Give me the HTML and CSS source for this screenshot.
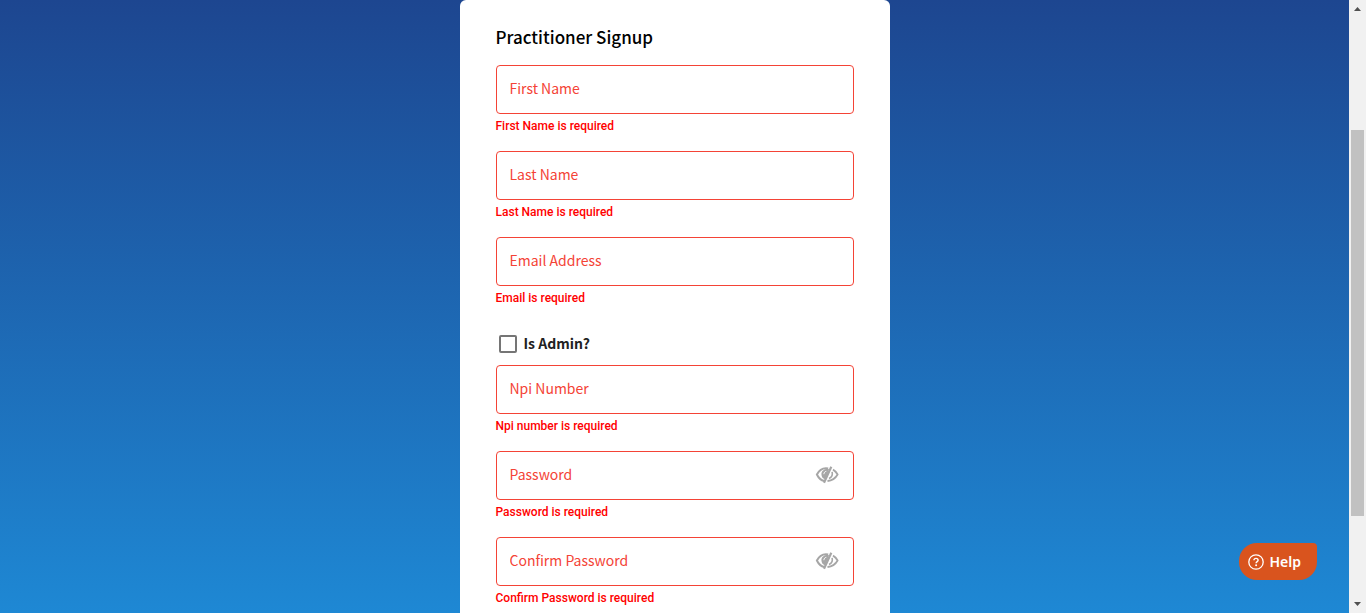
FILE: index.html
```html
<!DOCTYPE html>
<html lang="en">
<head>
<meta charset="utf-8">
<meta name="viewport" content="width=device-width, initial-scale=1">
<title>Practitioner Signup</title>
<link rel="stylesheet" href="styles.css">
</head>
<body>
<svg class="sprite" aria-hidden="true">
  <symbol id="eye-off" viewBox="0 0 24 20">
    <path d="M13.2 3.4C8 2.4 4 5.400 1.900 9.500C3.600 13 6 15.400 9.200 16" fill="none" stroke="currentColor" stroke-width="2"/>
    <path d="M15.300 1.200L17.300 2.200L10 18.200L8 17.200Z" fill="currentColor"/>
    <path d="M14 4.200C10 3.400 6.400 5.600 6.400 9C6.400 12 8 14 10.500 14.500Z" fill="currentColor"/>
    <path d="M8.900 9.200C8.900 7.700 9.800 6.500 11.300 6.300" fill="none" stroke="#fff" stroke-width="1"/>
    <path d="M18 4.600C20 5.700 21.500 7.300 22.600 9.500C20.300 13.600 17 15.700 12.500 16" fill="none" stroke="currentColor" stroke-width="1.800"/>
    <path d="M17.100 6.900C17.800 9.700 16.500 12.500 14 13.500" fill="none" stroke="currentColor" stroke-width="1.600"/>
  </symbol>
</svg>
<div class="window">
  <main class="page">
    <form class="card" novalidate>
      <h1 class="title">Practitioner Signup</h1>
      <div class="field">
        <input class="input" type="text" placeholder="First Name" aria-label="First Name" aria-describedby="first-error">
        <p class="error" id="first-error">First Name is required</p>
      </div>
      <div class="field">
        <input class="input" type="text" placeholder="Last Name" aria-label="Last Name" aria-describedby="last-error">
        <p class="error" id="last-error">Last Name is required</p>
      </div>
      <div class="field">
        <input class="input" type="email" placeholder="Email Address" aria-label="Email Address" aria-describedby="email-error">
        <p class="error" id="email-error">Email is required</p>
      </div>
      <div class="check-row">
        <input class="checkbox" type="checkbox" id="admin">
        <label class="check-label" for="admin">Is Admin?</label>
      </div>
      <div class="field">
        <input class="input" type="text" placeholder="Npi Number" aria-label="Npi Number" aria-describedby="npi-error">
        <p class="error" id="npi-error">Npi number is required</p>
      </div>
      <div class="field">
        <div class="input-wrap">
          <input class="input" type="password" placeholder="Password" aria-label="Password" aria-describedby="pw-error">
          <button class="reveal" type="button" aria-label="Show password"><svg class="eye"><use href="#eye-off"/></svg></button>
        </div>
        <p class="error" id="pw-error">Password is required</p>
      </div>
      <div class="field">
        <div class="input-wrap">
          <input class="input" type="password" placeholder="Confirm Password" aria-label="Confirm Password" aria-describedby="confirm-error">
          <button class="reveal" type="button" aria-label="Show confirm password"><svg class="eye"><use href="#eye-off"/></svg></button>
        </div>
        <p class="error" id="confirm-error">Confirm Password is required</p>
      </div>
    </form>
    <button class="help" type="button">
      <svg class="help-icon" viewBox="0 0 16 16" aria-hidden="true">
        <circle cx="8" cy="8" r="7.200" fill="none" stroke="currentColor" stroke-width="1.300"/>
        <path d="M5.900 6.300C6 5 6.800 4.400 8 4.400C9.200 4.400 10.100 5.100 10.100 6.200C10.100 7.600 8.100 7.600 8.100 9.200" fill="none" stroke="currentColor" stroke-width="1.400"/>
        <circle cx="8.100" cy="11.300" r="1" fill="currentColor"/>
      </svg>
      Help
    </button>
  </main>
  <div class="scrollbar" aria-hidden="true">
    <svg class="arrow" viewBox="0 0 17 17"><path d="M5 11L8.500 7L12 11Z" fill="#505050"/></svg>
    <div class="track"><div class="thumb"></div></div>
    <svg class="arrow" viewBox="0 0 17 17"><path d="M5 6L8.500 10L12 6Z" fill="#505050"/></svg>
  </div>
</div>
</body>
</html>
```

FILE: styles.css
```css
* {
  box-sizing: border-box;
}

body {
  margin: 0;
  font-family: "Noto Sans CJK SC", "Noto Sans", sans-serif;
}

.sprite {
  display: none;
}

.window {
  display: flex;
  height: 100vh;
  overflow: hidden;
}

.page {
  position: relative;
  flex: 1;
  display: flex;
  justify-content: center;
  align-items: flex-start;
  padding: 0 16px;
  background: linear-gradient(#1d4690, #1e88d4);
}

.card {
  width: 100%;
  max-width: 430px;
  padding: 24px 36px;
  border-radius: 6px;
  background: #fff;
}

.title {
  margin: 0 0 15px;
  font-size: 17px;
  line-height: 26px;
  font-weight: 500;
  color: #000;
}

.field {
  margin-bottom: 12px;
}

.input-wrap {
  position: relative;
}

.input {
  display: block;
  width: 100%;
  height: 49px;
  padding: 0 13px 3px;
  border: 1px solid #f44336;
  border-radius: 4px;
  background: #fff;
  color: #212121;
  font: 400 14px "Noto Sans CJK SC", "Noto Sans", sans-serif;
}

.input::placeholder {
  color: #f44336;
  opacity: 1;
}

.reveal {
  position: absolute;
  top: 0;
  right: 15px;
  bottom: 2px;
  display: flex;
  align-items: center;
  padding: 0;
  border: 0;
  background: none;
  color: #a6a6a6;
}

.eye {
  width: 24px;
  height: 20px;
}

.error {
  margin: 0;
  font: 500 12px/25px Roboto, sans-serif;
  color: #f00;
}

.check-row {
  display: flex;
  align-items: center;
  gap: 7px;
  height: 42px;
  padding-left: 3px;
}

.checkbox {
  appearance: none;
  width: 18px;
  height: 18px;
  margin: 0;
  border: 2px solid #757575;
  border-radius: 2px;
  background: #fff;
}

.checkbox:checked {
  background: #757575;
}

.check-label {
  padding-bottom: 3px;
  font-size: 14px;
  line-height: 20px;
  font-weight: 700;
  color: #212121;
}

.help {
  position: absolute;
  right: 32px;
  bottom: 33px;
  display: flex;
  align-items: center;
  gap: 6px;
  height: 37px;
  padding: 0 16px 0 9px;
  border: 0;
  border-radius: 18px 4px 18px 18px;
  background: #d9541e;
  color: #fff;
  font: 600 14px "Noto Sans", sans-serif;
}

.help-icon {
  width: 16px;
  height: 16px;
}

.scrollbar {
  display: flex;
  flex-direction: column;
  width: 17px;
  background: #f1f1f1;
}

.arrow {
  width: 17px;
  height: 17px;
}

.track {
  flex: 1;
  display: grid;
  grid-template-rows: 113fr 386fr 80fr;
  padding: 0 2px;
}

.thumb {
  grid-row: 2;
  background: #c1c1c1;
}
```
